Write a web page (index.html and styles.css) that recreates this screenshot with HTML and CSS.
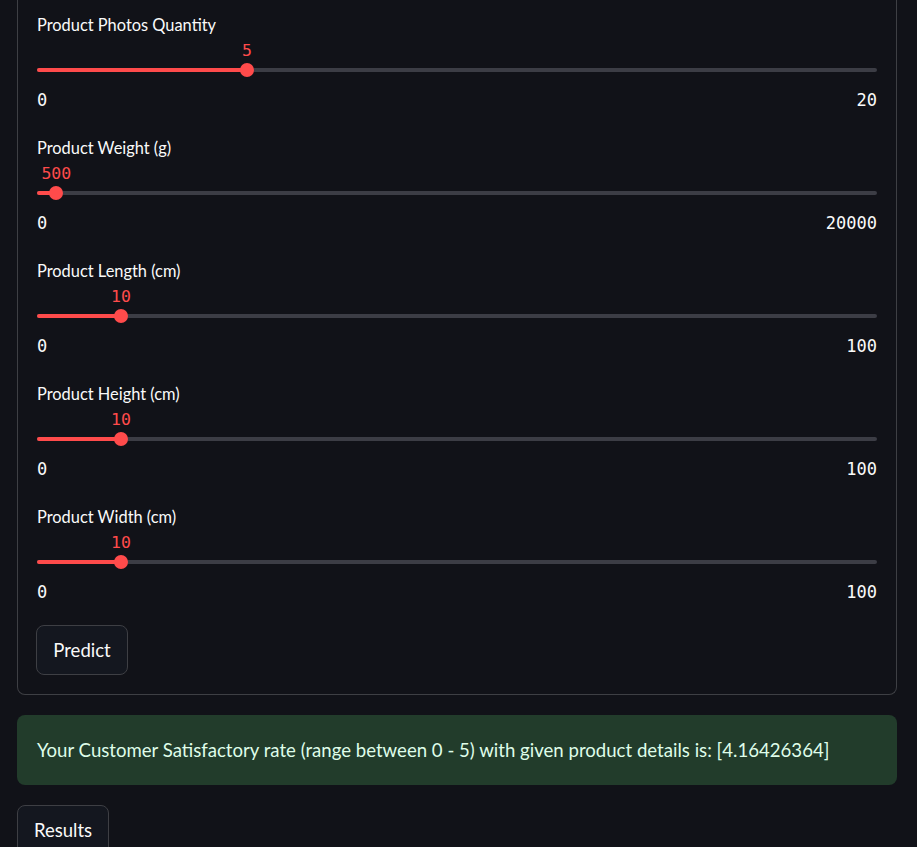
FILE: index.html
```html
<!DOCTYPE html>
<html lang="en">
<head>
<meta charset="utf-8">
<title>Prediction</title>
<link rel="stylesheet" href="styles.css">
</head>
<body>
<main class="page">
  <section class="form">
    <div class="slider">
      <div class="label">Product Photos Quantity</div>
      <div class="value-row"><span class="value" style="left:25%">5</span></div>
      <div class="track"><div class="fill" style="width:25%"></div><div class="thumb" style="left:25%"></div></div>
      <div class="ticks"><span>0</span><span>20</span></div>
    </div>
    <div class="slider">
      <div class="label">Product Weight (g)</div>
      <div class="value-row"><span class="value" style="left:2.3%">500</span></div>
      <div class="track"><div class="fill" style="width:2.3%"></div><div class="thumb" style="left:2.3%"></div></div>
      <div class="ticks"><span>0</span><span>20000</span></div>
    </div>
    <div class="slider">
      <div class="label">Product Length (cm)</div>
      <div class="value-row"><span class="value" style="left:10%">10</span></div>
      <div class="track"><div class="fill" style="width:10%"></div><div class="thumb" style="left:10%"></div></div>
      <div class="ticks"><span>0</span><span>100</span></div>
    </div>
    <div class="slider">
      <div class="label">Product Height (cm)</div>
      <div class="value-row"><span class="value" style="left:10%">10</span></div>
      <div class="track"><div class="fill" style="width:10%"></div><div class="thumb" style="left:10%"></div></div>
      <div class="ticks"><span>0</span><span>100</span></div>
    </div>
    <div class="slider">
      <div class="label">Product Width (cm)</div>
      <div class="value-row"><span class="value" style="left:10%">10</span></div>
      <div class="track"><div class="fill" style="width:10%"></div><div class="thumb" style="left:10%"></div></div>
      <div class="ticks"><span>0</span><span>100</span></div>
    </div>
    <button class="btn predict" type="button">Predict</button>
  </section>
  <div class="alert">Your Customer Satisfactory rate (range between 0 - 5) with given product details is: [4.16426364]</div>
  <button class="btn results" type="button">Results</button>
</main>
</body>
</html>
```
FILE: styles.css
```css
html, body {
  margin: 0;
  padding: 0;
  background: #111218;
  color: #fafafa;
  font-family: Lato, "Noto Sans", sans-serif;
  overflow: hidden;
}
.page {
  width: 880px;
  margin-left: 17px;
  display: flex;
  flex-direction: column;
  align-items: flex-start;
}
.form {
  width: 880px;
  box-sizing: border-box;
  border: 1px solid #3e3f44;
  border-top: none;
  border-radius: 0 0 8px 8px;
  padding: 14px 19px 19px 19px;
  display: flex;
  flex-direction: column;
  align-items: flex-start;
}
.slider {
  width: 840px;
  display: flex;
  flex-direction: column;
  margin-bottom: 26px;
}
.slider:last-of-type { margin-bottom: 22px; }
.label {
  height: 22px;
  line-height: 22px;
  font-size: 16.4px;
  color: #fafafa;
}
.value-row {
  position: relative;
  height: 22px;
  margin-top: 4px;
}
.value {
  position: absolute;
  top: 0;
  transform: translateX(-50%);
  line-height: 22px;
  font-family: "DejaVu Sans Mono", "Liberation Mono", monospace;
  font-size: 16.5px;
  color: #ff4b4b;
}
.track {
  position: relative;
  height: 4px;
  margin: 6px 0 10px;
  background: #3c3d45;
  border-radius: 2px;
}
.fill {
  height: 4px;
  background: #ff4b4b;
  border-radius: 2px;
}
.thumb {
  position: absolute;
  top: -5px;
  width: 14px;
  height: 14px;
  margin-left: -7px;
  border-radius: 50%;
  background: #ff4b4b;
}
.ticks {
  display: flex;
  justify-content: space-between;
  height: 22px;
  line-height: 22px;
  margin-top: 7px;
  font-family: "DejaVu Sans Mono", "Liberation Mono", monospace;
  font-size: 17px;
  color: #fafafa;
}
.btn {
  height: 50px;
  width: 92px;
  box-sizing: border-box;
  border: 1px solid #3e3f44;
  border-radius: 8px;
  background: #14171f;
  color: #fafafa;
  font-family: Lato, "Noto Sans", sans-serif;
  font-size: 18.5px;
  padding: 0;
}
.predict {
  margin-left: -1px;
}
.alert {
  width: 880px;
  box-sizing: border-box;
  margin-top: 20px;
  height: 70px;
  padding: 0 20px;
  display: flex;
  align-items: center;
  background: #223c2b;
  color: #dffde9;
  border-radius: 8px;
  font-size: 18.6px;
}
.results {
  margin-top: 20px;
}
```
